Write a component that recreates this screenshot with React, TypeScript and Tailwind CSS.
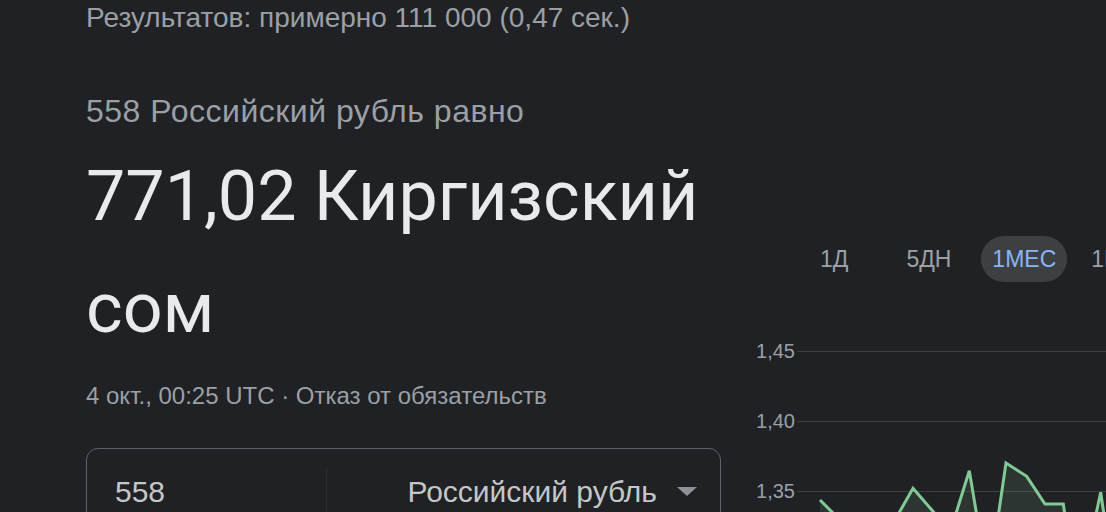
import React from 'react'

const points: [number, number][] = [
  [70, 184],
  [125, 239],
  [163, 172.3],
  [200.4, 215.4],
  [219.3, 154.7],
  [238.3, 268],
  [256, 147],
  [276.7, 160.3],
  [295, 188],
  [313.3, 188],
  [327.3, 286],
  [350.7, 176.3],
  [360, 240],
]

function RateChart() {
  const line = points.map(([x, y]) => `${x},${y}`).join(' ')
  const area = `${line} 360,320 70,320`

  return (
    <div className="relative mt-[34px]">
      {['1,45', '1,40', '1,35'].map((label) => (
        <div key={label} className="flex h-[70px] items-center">
          <span className="w-[47px] pr-[2px] text-right text-[20px] leading-[24px] text-[#9aa0a6] font-['Liberation_Sans',Arial,sans-serif]">
            {label}
          </span>
          <div className="h-px flex-1 bg-[#3c4043]" />
        </div>
      ))}

      {/* series */}
      <svg
        className="absolute left-0 top-0 overflow-visible"
        width="356"
        height="210"
        viewBox="0 0 356 210"
      >
        <polygon points={area} fill="rgba(129,201,149,0.12)" />
        <polyline
          points={line}
          fill="none"
          stroke="#81c995"
          strokeWidth="3"
          strokeLinejoin="miter"
        />
      </svg>
    </div>
  )
}

function RangeTabs() {
  return (
    <div className="mt-[200px] flex h-[46px] items-center text-[23px] text-[#9aa0a6] font-['Liberation_Sans',Arial,sans-serif] whitespace-nowrap">
      <span className="ml-[70px]">1Д</span>
      <span className="ml-[58px]">5ДН</span>
      <span className="ml-[30px] flex h-[46px] items-center rounded-full bg-[#3c4043] px-[11px] text-[#8ab4f8]">
        1МЕС
      </span>
      <span className="ml-[24px]">1Г</span>
    </div>
  )
}

export default function App() {
  return (
    <div className="h-[512px] w-[1106px] overflow-hidden bg-[#202124] font-['Liberation_Sans',Arial,sans-serif]">
      {/* Results count */}
      <div className="pl-[86px] text-[28px] leading-[36px] text-[#9aa0a6]">
        Результатов: примерно 111 000 (0,47 сек.)
      </div>

      <div className="flex">
        {/* Left: converter */}
        <div className="w-[750px] shrink-0 pl-[86px]">
          <div className="mt-[57px] text-[32px] leading-[36px] tracking-[0.5px] text-[#9aa0a6]">
            558 Российский рубль равно
          </div>
          <div className="mt-[11px] w-[635px] text-[70px] leading-[112px] text-[#e8eaed] font-['Roboto',sans-serif]">
            771,02 Киргизский сом
          </div>
          <div className="mt-[17px] text-[24px] leading-[30px] text-[#9aa0a6]">
            4 окт., 00:25 UTC · Отказ от обязательств
          </div>

          <div className="mt-[37px] flex h-[90px] w-[635px] items-start rounded-[12px] border border-[#5f6368]">
            <div className="mt-[18px] h-[70px] w-[240px] border-r border-[#2c2d30] pl-[28px] pt-[7px] text-[30px] leading-[36px] text-[#c4c7ca]">
              558
            </div>
            <div className="mt-[25px] flex flex-1 items-center justify-end gap-[20px] pr-[23px]">
              <span className="text-[30px] leading-[36px] text-[#c4c7ca]">Российский рубль</span>
              <svg width="20" height="10" viewBox="0 0 20 10">
                <polygon points="0,0 20,0 10,9" fill="#8e9195" />
              </svg>
            </div>
          </div>
        </div>

        {/* Right: chart */}
        <div className="flex-1">
          <RangeTabs />
          <RateChart />
        </div>
      </div>
    </div>
  )
}
